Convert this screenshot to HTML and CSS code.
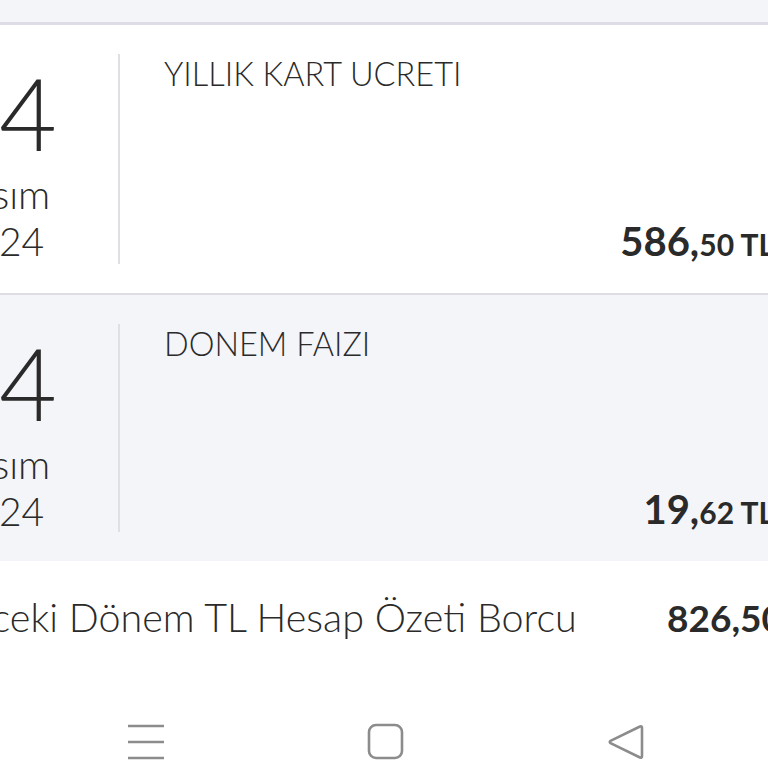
FILE: index.html
```html
<!DOCTYPE html>
<html lang="tr">
<head>
  <meta charset="UTF-8" />
  <meta name="viewport" content="width=device-width, initial-scale=1.0" />
  <title>Hesap Özeti</title>
  <link rel="stylesheet" href="styles.css">
</head>
<body>
  <div class="topbar"></div>

  <div class="list">
    <div class="txn">
      <div class="date">
        <div class="day">14</div>
        <div class="month">Kasım</div>
        <div class="year">2024</div>
      </div>
      <div class="info">
        <div class="title">YILLIK KART UCRETI</div>
        <div class="amount">586,<small>50 TL</small></div>
      </div>
    </div>

    <div class="txn alt">
      <div class="date">
        <div class="day">14</div>
        <div class="month">Kasım</div>
        <div class="year">2024</div>
      </div>
      <div class="info">
        <div class="title">DONEM FAIZI</div>
        <div class="amount">19,<small>62 TL</small></div>
      </div>
    </div>
  </div>

  <div class="summary">
    <span class="label">Önceki Dönem TL Hesap Özeti Borcu</span>
    <span class="total">826,50 TL</span>
  </div>

  <!-- android nav bar -->
  <nav class="navbar">
    <svg width="38" height="38" viewBox="0 0 38 38" fill="none" stroke="#8c8c8c" stroke-width="2.6">
      <path d="M1 3h36M1 19h36M1 35h36"/>
    </svg>
    <svg width="38" height="38" viewBox="0 0 38 38" fill="none" stroke="#8c8c8c" stroke-width="2.6">
      <rect x="2" y="2" width="33" height="33" rx="7"/>
    </svg>
    <svg width="38" height="38" viewBox="0 0 38 38" fill="none" stroke="#8c8c8c" stroke-width="2.6" stroke-linejoin="round">
      <path d="M33 3.5c1-.6 2 0 2 1.2v28.6c0 1.2-1 1.8-2 1.2L3.5 20.2c-1-.6-1-1.8 0-2.4z"/>
    </svg>
  </nav>
</body>
</html>
```

FILE: styles.css
```css
/* ─── statement list, zoomed phone view ───────────────────── */
:root {
  --bg-alt: #f4f5f9;
  --line: #dedde7;
  --text: #2a2a2a;
  --icon: #8c8c8c;
}
*, *::before, *::after { box-sizing: border-box; }
html, body { margin: 0; overflow: hidden; }
body {
  width: 768px;
  height: 768px;
  background: #fff;
  color: var(--text);
  font-family: Lato, "Open Sans", sans-serif;
}

.topbar {
  height: 25px;
  background: var(--bg-alt);
  border-bottom: 3px solid var(--line);
}

/* ── transaction rows ─────────────────────────────── */
.txn {
  display: flex;
  height: 270px;
  background: #fff;
  border-bottom: 2px solid #dddde3;
  padding: 29px 0 29px;
}
.txn.alt {
  height: 266px;
  background: var(--bg-alt);
  border-bottom: none;
}

.date {
  width: 240px;
  margin-left: -120px;
  text-align: center;
  font-weight: 300;
  border-right: 2px solid #e0e0e4;
}
.day {
  font-size: 100px;
  line-height: 1;
  margin-top: 8px;
}
.month {
  font-size: 40px;
  line-height: 1;
  margin-top: 12px;
}
.year {
  font-size: 39px;
  line-height: 1;
  margin-top: 8px;
}

.info {
  flex: 1;
  display: flex;
  flex-direction: column;
  justify-content: space-between;
  padding-left: 44px;
  margin-right: -6px;
}
.title {
  font-size: 32.5px;
  font-weight: 300;
  line-height: 1;
  margin-top: 4px;
}
.amount {
  align-self: flex-end;
  font-size: 40px;
  font-weight: 700;
  line-height: 1;
  margin-bottom: 3px;
}
.amount small { font-size: 30px; }

/* ── summary ──────────────────────────────────────── */
.summary {
  display: flex;
  align-items: baseline;
  height: 138px;
  padding-top: 32px;
  margin-left: -61px;
}
.summary .label {
  flex-shrink: 0;
  font-size: 39.5px;
  font-weight: 300;
  width: 728px;
}
.summary .total {
  font-size: 37px;
  font-weight: 700;
  white-space: nowrap;
}

/* ── nav bar ──────────────────────────────────────── */
.navbar {
  display: flex;
  justify-content: center;
  gap: 202px;
  padding-top: 24px;
  padding-left: 3px;
}
```
